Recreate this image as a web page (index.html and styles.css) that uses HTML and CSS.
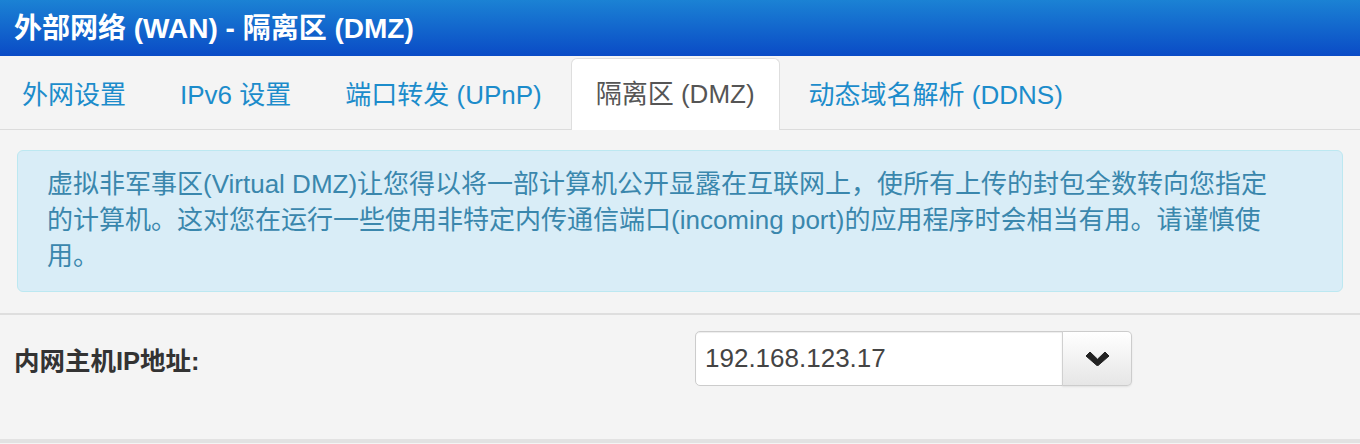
FILE: index.html
```html
<!DOCTYPE html>
<html lang="zh-CN">
<head>
<meta charset="utf-8">
<title>外部网络 (WAN) - 隔离区 (DMZ)</title>
<link rel="stylesheet" href="styles.css">
</head>
<body>
<div class="header">外部网络 (WAN) - 隔离区 (DMZ)</div>
<div class="tabs">
  <a class="tab">外网设置</a>
  <a class="tab">IPv6 设置</a>
  <a class="tab">端口转发 (UPnP)</a>
  <a class="tab active">隔离区 (DMZ)</a>
  <a class="tab">动态域名解析 (DDNS)</a>
</div>
<div class="alert">虚拟非军事区(Virtual DMZ)让您得以将一部计算机公开显露在互联网上，使所有上传的封包全数转向您指定的计算机。这对您在运行一些使用非特定内传通信端口(incoming port)的应用程序时会相当有用。请谨慎使用。</div>
<div class="form-row">
  <div class="label">内网主机IP地址:</div>
  <div class="input-group">
    <div class="input">192.168.123.17</div>
    <div class="btn">
      <svg width="23" height="14" viewBox="0 0 23 14"><polygon points="0,4 4,0 11.5,7.2 19,0 23,4 11.5,14" fill="#222" stroke="#222" stroke-width="1" stroke-linejoin="round"/></svg>
    </div>
  </div>
</div>
</body>
</html>
```

FILE: styles.css
```css
* { box-sizing: border-box; }
html, body { margin: 0; padding: 0; }
body {
  background: #f4f4f4;
  font-family: "Liberation Sans", "Noto Sans CJK SC", sans-serif;
  width: 1360px;
  height: 444px;
  overflow: hidden;
}
.header {
  height: 56px;
  background: linear-gradient(#1b82d4, #0a4bc6);
  color: #fff;
  font-size: 28px;
  font-weight: bold;
  padding: 0 0 5px 14px;
  display: flex;
  align-items: center;
}
.tabs {
  height: 74px;
  border-bottom: 1px solid #dcdcdc;
  display: flex;
  align-items: flex-end;
  padding-left: 0;
}
.tab {
  height: 70px;
  padding: 0 24px 6px;
  margin-right: 4px;
  font-size: 26px;
  color: #1c8ccb;
  display: flex;
  align-items: center;
  border: 1px solid transparent;
  border-bottom: none;
  margin-bottom: -1px;
}
.tab:first-child { padding-left: 21px; }
.tab.active {
  height: 72px;
  background: #fff;
  border-color: #dedede;
  border-radius: 6px 6px 0 0;
  color: #555;
}
.alert {
  margin: 20px 17px 0;
  background: #d9edf7;
  border: 1px solid #bce8f1;
  border-radius: 6px;
  color: #3a87ad;
  font-size: 26px;
  line-height: 36px;
  padding: 15px 63px 17px 29px;
}
.form-row {
  margin-top: 21px;
  border-top: 2px solid #dedede;
  border-bottom: 4px solid #e2e2e2;
  padding: 16px 0 53px 14px;
  display: grid;
  grid-template-columns: 681px auto;
  align-items: center;
}
.label {
  font-size: 25.5px;
  font-weight: bold;
  color: #333;
}
.input-group {
  display: flex;
  height: 55px;
}
.input {
  width: 368px;
  height: 55px;
  background: #fff;
  border: 1px solid #cccccc;
  border-radius: 5px 0 0 5px;
  box-shadow: inset 0 1px 1px rgba(0,0,0,0.075);
  padding-left: 9px;
  font-size: 26px;
  color: #444;
  display: flex;
  align-items: center;
}
.btn {
  width: 70px;
  height: 55px;
  border: 1px solid #cccccc;
  border-left: 1px solid #d0d0d0;
  border-radius: 0 5px 5px 0;
  background: linear-gradient(#ffffff, #e6e6e6);
  box-shadow: 0 1px 2px rgba(0,0,0,0.08);
  display: flex;
  align-items: center;
  justify-content: center;
  margin-left: -1px;
}
```
